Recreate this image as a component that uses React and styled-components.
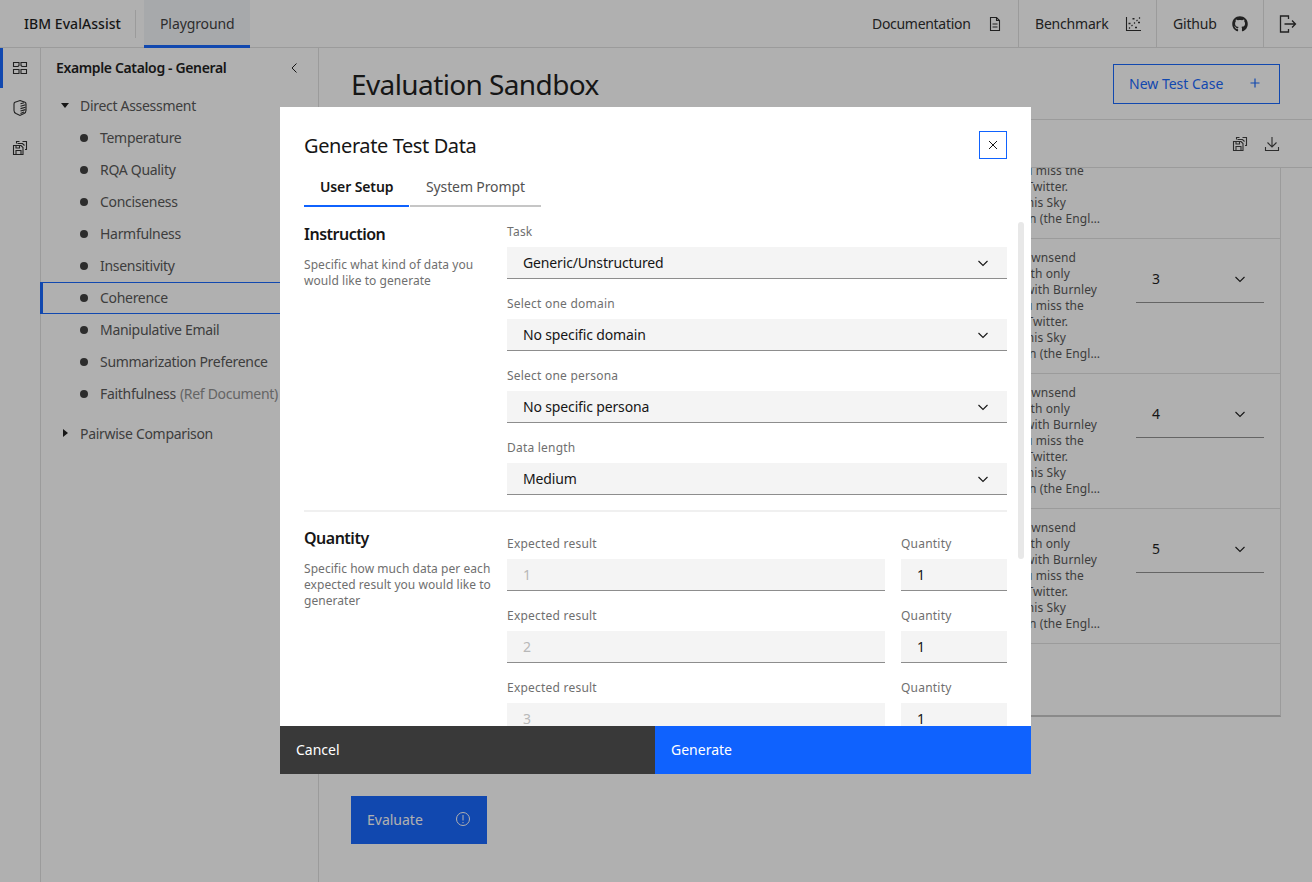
import React from 'react';
import styled, { createGlobalStyle } from 'styled-components';
import { FaGithub } from 'react-icons/fa';

const FONT = `"Noto Sans", "Liberation Sans", sans-serif`;

const Global = createGlobalStyle`
  html, body { margin: 0; padding: 0; height: 100%; background: #fff; }
  body { font-family: ${FONT}; color: #161616; font-size: 14px; overflow: hidden; }
  * { box-sizing: border-box; }
`;

const Page = styled.div`width:1312px;height:882px;display:flex;flex-direction:column;overflow:hidden;`;
const Header = styled.header`height:48px;flex:none;display:flex;align-items:stretch;border-bottom:1px solid #e0e0e0;`;
const Brand = styled.div`display:flex;align-items:center;padding-left:24px;font-weight:500;letter-spacing:.05px;width:136px;position:relative;
  &::after{content:'';position:absolute;right:0;top:10px;bottom:9px;width:1px;background:#e0e0e0;}`;
const PlayTab = styled.div`margin-left:8px;width:106px;padding:1px 0 0 16px;display:flex;align-items:center;background:#f2f4f8;border-bottom:3px solid #0f62fe;margin-bottom:-1px;color:#393939;letter-spacing:-.1px;`;
const HeaderRight = styled.nav`margin-left:auto;display:flex;`;
const NavItem = styled.div`width:${p => p.$w}px;padding:${p => p.$last ? 0 : '0 15px 0 16px'};display:flex;align-items:center;justify-content:${p => p.$last ? 'center' : 'space-between'};border-right:${p => p.$last ? 0 : '1px solid #e0e0e0'};color:#262626;letter-spacing:${p => p.$ls || 0}px;`;

const Shell = styled.div`flex:1;display:flex;min-height:0;`;
const Rail = styled.aside`width:41px;flex:none;border-right:1px solid #e0e0e0;display:flex;flex-direction:column;`;
const RailBtn = styled.div`height:40px;display:flex;align-items:center;justify-content:center;border-left:3px solid ${p => p.$active ? '#0f62fe' : 'transparent'};padding-right:3px;color:#262626;`;
const Panel = styled.aside`width:278px;flex:none;border-right:1px solid #e0e0e0;`;
const PanelHead = styled.div`height:40px;display:flex;align-items:center;justify-content:space-between;padding:0 16px 1px 15px;font-weight:600;color:#161616;letter-spacing:-.36px;`;
const Tree = styled.div`padding-top:2px;letter-spacing:-.3px;`;
const GroupRow = styled.div`height:32px;display:flex;align-items:center;padding:0 0 2px 20px;margin-top:${p => p.$top || 0}px;color:#525252;`;
const Caret = styled.span`width:19px;display:flex;color:#161616;`;
const Item = styled.div`height:32px;margin-left:-1px;display:flex;align-items:center;padding:0 0 1px 37px;color:#525252;white-space:nowrap;
  border-left:3px solid ${p => p.$active ? '#0f62fe' : 'transparent'};
  border-top:1px solid ${p => p.$active ? '#0f62fe' : 'transparent'};
  border-bottom:1px solid ${p => p.$active ? '#0f62fe' : 'transparent'};`;
const Dot = styled.span`width:8px;height:8px;border-radius:50%;background:#393939;margin-right:12px;flex:none;`;
const Muted = styled.span`color:#8d8d8d;margin-left:4px;`;

const Main = styled.main`flex:1;min-width:0;display:flex;flex-direction:column;`;
const MainHead = styled.div`height:72px;flex:none;display:flex;align-items:center;justify-content:space-between;padding:0 32px;border-bottom:1px solid #e0e0e0;`;
const Title = styled.h1`margin:0;font-size:28px;font-weight:400;line-height:36px;letter-spacing:-.6px;`;
const OutlineBtn = styled.div`width:167px;height:40px;border:1px solid #0f62fe;color:#0f62fe;display:flex;align-items:center;justify-content:space-between;padding:0 16px 2px 15px;margin-top:1px;`;
const ToolBar = styled.div`height:48px;flex:none;display:flex;align-items:center;justify-content:flex-end;gap:16px;padding:0 32px 0 0;border-bottom:1px solid #e0e0e0;color:#393939;`;
const TableWrap = styled.div`margin-left:32px;width:930px;height:549px;flex:none;overflow:hidden;border-right:1px solid #e0e0e0;border-bottom:2px solid #c6c6c6;display:flex;flex-direction:column;`;
const Row = styled.div`display:grid;grid-template-columns:768px 161px;grid-template-rows:100%;height:${p => p.$h}px;flex:none;border-bottom:${p => p.$last ? 0 : '1px solid #e0e0e0'};overflow:hidden;`;
const TextCell = styled.div`display:flex;flex-direction:column;justify-content:flex-end;padding-bottom:11px;font-size:12px;line-height:16px;letter-spacing:.1px;color:#525252;min-height:0;`;
const Line = styled.div`text-align:right;white-space:nowrap;height:16px;flex:none;padding-right:${p => p.$inset}px;`;
const SelectCell = styled.div`padding:24px 16px 0 17px;`;
const CellSelect = styled.div`height:40px;border-bottom:1px solid #8d8d8d;display:flex;align-items:center;justify-content:space-between;padding:0 16px 8px;color:#161616;`;
const Evaluate = styled.div`margin:79px 0 0 32px;width:136px;height:48px;background:#0f62fe;color:#fff;display:flex;align-items:center;justify-content:space-between;padding:0 16px 2px;flex:none;`;

const Overlay = styled.div`position:fixed;inset:0;background:rgba(22,22,22,.34);padding:107px 0 0 280px;`;
const Modal = styled.div`width:751px;height:667px;background:#fff;display:flex;flex-direction:column;position:relative;`;
const ModalHead = styled.div`display:flex;align-items:center;justify-content:space-between;padding:24px 24px 0;flex:none;`;
const ModalTitle = styled.h2`margin:0;font-size:20px;font-weight:400;height:28px;line-height:30px;letter-spacing:-.4px;`;
const CloseBtn = styled.div`width:28px;height:28px;border:1px solid #0f62fe;display:flex;align-items:center;justify-content:center;color:#161616;`;
const Tabs = styled.div`display:flex;gap:1px;margin:11px 0 0 24px;flex:none;letter-spacing:-.12px;`;
const Tab = styled.div`width:${p => p.$w}px;height:37px;padding:0 16px 2px;display:flex;align-items:center;white-space:nowrap;border-bottom:2px solid ${p => p.$active ? '#0f62fe' : '#c6c6c6'};color:${p => p.$active ? '#161616' : '#525252'};font-weight:${p => p.$active ? 600 : 400};`;
const Body = styled.div`flex:1;min-height:0;overflow:hidden;padding:0 24px;`;
const Section = styled.section`display:grid;grid-template-columns:203px 500px;padding-top:${p => p.$top}px;padding-bottom:15px;border-bottom:${p => p.$divider ? '2px solid #f0f0f0' : 0};`;
const SecTitle = styled.h3`margin:0 0 13px;font-size:16px;line-height:20px;font-weight:600;color:#161616;letter-spacing:-.5px;`;
const SecDesc = styled.p`margin:0;padding-right:8px;font-size:12px;line-height:16px;letter-spacing:.05px;color:#6f6f6f;`;
const Fields = styled.div`margin-top:${p => p.$offset}px;display:flex;flex-direction:column;gap:16px;`;
const Field = styled.div`display:flex;flex-direction:column;`;
const Label = styled.div`font-size:12px;line-height:16px;letter-spacing:.22px;color:#6f6f6f;padding-top:1px;margin-bottom:7px;`;
const Control = styled.div`height:32px;background:#f4f4f4;border-bottom:1px solid #8d8d8d;display:flex;align-items:center;justify-content:space-between;padding:0 16px;letter-spacing:-.15px;color:${p => p.$disabled ? '#b8b8b8' : '#161616'};`;
const QtyRow = styled.div`display:grid;grid-template-columns:378px 106px;column-gap:16px;`;
const Thumb = styled.div`position:absolute;left:738px;top:115px;width:6px;height:337px;background:#e8e8e8;border-radius:3px;`;
const Footer = styled.div`height:48px;flex:none;display:grid;grid-template-columns:375px 376px;`;
const FootBtn = styled.div`background:${p => p.$primary ? '#0f62fe' : '#393939'};color:#fff;display:flex;align-items:center;padding:0 0 2px 16px;`;

const Ico = ({ s = 16, children, sw = 1 }) => (
  <svg width={s} height={s} viewBox="0 0 16 16" fill="none" stroke="currentColor" strokeWidth={sw}>{children}</svg>
);
const Chevron = () => <Ico sw={1.1}><path d="M3.5 6l4.5 4.5L12.5 6" /></Ico>;
const SaveSeries = () => (
  <Ico sw={1.1}>
    <path d="M1.5 5.5h7.5l2 2v7H1.5z" />
    <path d="M4 14.5v-4h5v4M4 5.5v2.5h3.5V5.5" />
    <path d="M4.5 3.5v-2h3M5.5 3.5h5l2 2" />
    <path d="M10.5 1.5h4v8h-1.5" />
  </Ico>
);
const CatalogIco = () => (
  <Ico sw={1.1}>
    <path d="M1.5 2.5h5.5v3l-1 1H1.5zM1.5 9.5h5.5v4H1.5zM9 2.5h5.5v4H10l-1-1zM9 9.5h5.5v4H9z" />
  </Ico>
);
const ShieldIco = () => (
  <Ico sw={1.1}>
    <path d="M8 .6L13 2.2Q14 2.6 14 4V10.5Q14 12.5 12 13.6L8 15.4 4 13.6Q2 12.500 2 10.500V4Q2 2.600 3 2.200Z" />
    <path d="M8.500 3.800l3.500-1M8.500 6.200l5-1.400M8.500 8.600l5-1.400M8.500 11l5-1.400M8.500 13.400l3.500-1.300" />
  </Ico>
);
const DocIco = () => (
  <Ico sw={1.1}><path d="M3.500 1.500h6l3 3v10h-9z" /><path d="M9.500 1.500v3h3M5.500 8h5M5.500 11h5" /></Ico>
);
const ChartIco = () => (
  <Ico sw={1.1}>
    <path d="M1.500 1v13.500H16" />
    <path d="M4 12.500l1-1M6.500 10l1-1M9 7.500l1-1M11.500 5l1-1M14 2.500l1-1" />
    <path d="M3.500 7.500h2M7.500 2.800h2M10 11.500h2M13 6.500h2" strokeWidth="1.500" />
  </Ico>
);
const LogoutIco = () => (
  <svg width="18" height="18" viewBox="0 0 18 18" fill="none" stroke="currentColor" strokeWidth="1.300"><path d="M9.500 4V1H1.500v16h8v-3" /><path d="M5.500 9h11M13 5.500L16.500 9 13 12.500" /></svg>
);
const DownloadIco = () => (
  <Ico sw={1.1}><path d="M8 1v10M3.500 6.500L8 11l4.500-4.500M1.500 11v3.500h13V11" /></Ico>
);
const InfoIco = () => (
  <Ico><circle cx="8" cy="8" r="6.500" /><path d="M8 4v5.500M8 11v1.200" /></Ico>
);

const tree = ['Temperature', 'RQA Quality', 'Conciseness', 'Harmfulness', 'Insensitivity', 'Coherence', 'Manipulative Email', 'Summarization Preference'];

const tails = [
  ['Andros Townsend', 43], ['goal with only', 49], ['draw with Burnley', 22], ['you miss the', 35],
  ['on Twitter.', 51], ['on this Sky', 53], ['again in (the Engl…', 19],
];
const rows = [
  { h: 71, lines: tails.slice(3) },
  { h: 135, lines: tails, v: '3' },
  { h: 135, lines: tails, v: '4' },
  { h: 135, lines: tails, v: '5' },
];

const SelectField = ({ label, value }) => (
  <Field><Label>{label}</Label><Control>{value}<Chevron /></Control></Field>
);
const QtyField = ({ n }) => (
  <QtyRow>
    <Field><Label>Expected result</Label><Control $disabled>{n}</Control></Field>
    <Field><Label>Quantity</Label><Control>1</Control></Field>
  </QtyRow>
);

export default function App() {
  return (
    <>
      <Global />
      <Page>
        <Header>
          <Brand>IBM EvalAssist</Brand>
          <PlayTab>Playground</PlayTab>
          <HeaderRight>
            <NavItem $w={163} $ls={-0.3}>Documentation<DocIco /></NavItem>
            <NavItem $w={138} $ls={-0.2}>Benchmark<ChartIco /></NavItem>
            <NavItem $w={107} $ls={-0.2}>Github<FaGithub size={16} /></NavItem>
            <NavItem $w={48} $last><LogoutIco /></NavItem>
          </HeaderRight>
        </Header>
        <Shell>
          <Rail>
            <RailBtn $active><CatalogIco /></RailBtn>
            <RailBtn><ShieldIco /></RailBtn>
            <RailBtn><SaveSeries /></RailBtn>
          </Rail>
          <Panel>
            <PanelHead>Example Catalog - General<Ico><path d="M10.500 3.500L6 8l4.500 4.500" /></Ico></PanelHead>
            <Tree>
              <GroupRow><Caret><svg width="8" height="5" viewBox="0 0 8 5"><path d="M0 0h8L4 5z" fill="currentColor" /></svg></Caret>Direct Assessment</GroupRow>
              {tree.map(t => <Item key={t} $active={t === 'Coherence'}><Dot />{t}</Item>)}
              <Item><Dot />Faithfulness<Muted>(Ref Document)</Muted></Item>
              <GroupRow $top={8}><Caret><svg width="5" height="8" viewBox="0 0 5 8" style={{ marginLeft: 2 }}><path d="M0 0v8l5-4z" fill="currentColor" /></svg></Caret>Pairwise Comparison</GroupRow>
            </Tree>
          </Panel>
          <Main>
            <MainHead>
              <Title>Evaluation Sandbox</Title>
              <OutlineBtn>New Test Case<Ico sw={1.200}><path d="M8 3.500v9M3.500 8h9" /></Ico></OutlineBtn>
            </MainHead>
            <ToolBar><SaveSeries /><DownloadIco /></ToolBar>
            <TableWrap>
              {rows.map((r, i) => (
                <Row key={i} $h={r.h}>
                  <TextCell>{r.lines.map(([t, inset]) => <Line key={t} $inset={inset}>{t}</Line>)}</TextCell>
                  <SelectCell>{r.v && <CellSelect>{r.v}<Chevron /></CellSelect>}</SelectCell>
                </Row>
              ))}
              <Row $h={71} $last />
            </TableWrap>
            <Evaluate>Evaluate<InfoIco /></Evaluate>
          </Main>
        </Shell>
      </Page>
      <Overlay>
        <Modal>
          <ModalHead>
            <ModalTitle>Generate Test Data</ModalTitle>
            <CloseBtn><svg width="10" height="10" viewBox="0 0 10 10" stroke="currentColor" strokeWidth="1"><path d="M1 1l8 8M9 1L1 9" /></svg></CloseBtn>
          </ModalHead>
          <Tabs>
            <Tab $w={105} $active>User Setup</Tab>
            <Tab $w={131}>System Prompt</Tab>
          </Tabs>
          <Body>
            <Section $top={17} $divider>
              <div>
                <SecTitle>Instruction</SecTitle>
                <SecDesc>Specific what kind of data you would like to generate</SecDesc>
              </div>
              <Fields $offset={-1}>
                <SelectField label="Task" value="Generic/Unstructured" />
                <SelectField label="Select one domain" value="No specific domain" />
                <SelectField label="Select one persona" value="No specific persona" />
                <SelectField label="Data length" value="Medium" />
              </Fields>
            </Section>
            <Section $top={16}>
              <div>
                <SecTitle>Quantity</SecTitle>
                <SecDesc>Specific how much data per each expected result you would like to generater</SecDesc>
              </div>
              <Fields $offset={7}>
                <QtyField n="1" />
                <QtyField n="2" />
                <QtyField n="3" />
              </Fields>
            </Section>
          </Body>
          <Thumb />
          <Footer>
            <FootBtn>Cancel</FootBtn>
            <FootBtn $primary>Generate</FootBtn>
          </Footer>
        </Modal>
      </Overlay>
    </>
  );
}
